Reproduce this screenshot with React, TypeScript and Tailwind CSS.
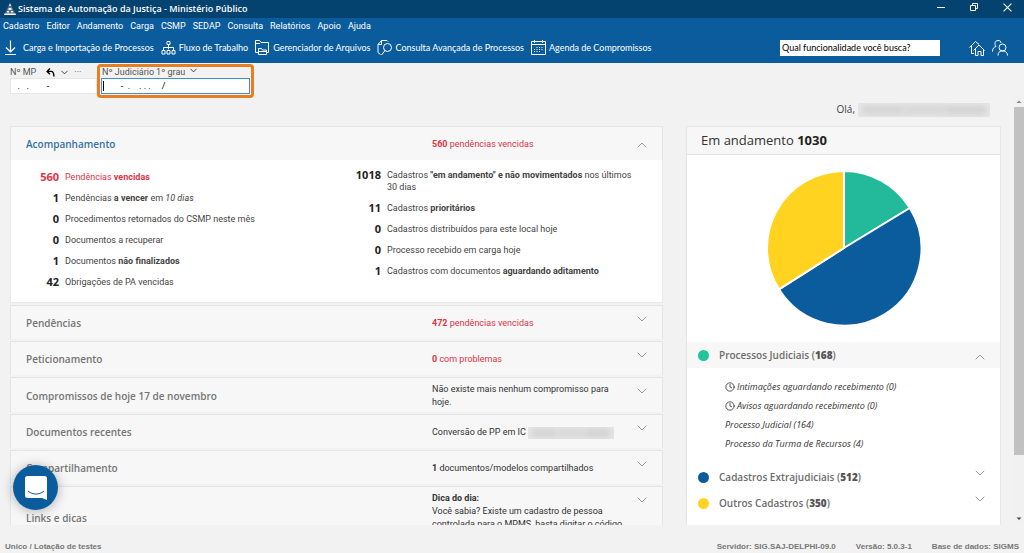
import { ReactNode } from 'react';
import clsx from 'clsx';
import { ChevronDown, ChevronUp, Clock } from 'lucide-react';

interface Counter {
  value: number;
  text: ReactNode;
  alert?: boolean;
}

interface Section {
  title: string;
  summary: ReactNode;
  alert?: boolean;
}

const menus = ['Cadastro', 'Editor', 'Andamento', 'Carga', 'CSMP', 'SEDAP', 'Consulta', 'Relatórios', 'Apoio', 'Ajuda'];

const leftCounters: Counter[] = [
  { value: 560, text: <>Pendências <b>vencidas</b></>, alert: true },
  { value: 1, text: <>Pendências <b>a vencer</b> em <i>10 dias</i></> },
  { value: 0, text: 'Procedimentos retornados do CSMP neste mês' },
  { value: 0, text: 'Documentos a recuperar' },
  { value: 1, text: <>Documentos <b>não finalizados</b></> },
  { value: 42, text: 'Obrigações de PA vencidas' },
];

const rightCounters: Counter[] = [
  { value: 1018, text: <>Cadastros <b>"em andamento" e não movimentados</b> nos últimos<br />30 dias</> },
  { value: 11, text: <>Cadastros <b>prioritários</b></> },
  { value: 0, text: 'Cadastros distribuídos para este local hoje' },
  { value: 0, text: 'Processo recebido em carga hoje' },
  { value: 1, text: <>Cadastros com documentos <b>aguardando aditamento</b></> },
];

const sections: Section[] = [
  { title: 'Pendências', summary: <><b>472</b> pendências vencidas</>, alert: true },
  { title: 'Peticionamento', summary: <><b>0</b> com problemas</>, alert: true },
  {
    title: 'Compromissos de hoje 17 de novembro',
    summary: <>Não existe mais nenhum compromisso para<br />hoje.</>,
  },
  {
    title: 'Documentos recentes',
    summary: (
      <span className="flex items-center gap-[2px] whitespace-nowrap">
        Conversão de PP em IC <Redacted className="h-3 w-[86px]" />
      </span>
    ),
  },
  { title: 'Compartilhamento', summary: <><b>1</b> documentos/modelos compartilhados</> },
];

function Redacted({ className }: { className: string }) {
  return (
    <span className={clsx('flex shrink-0 items-center gap-px overflow-hidden bg-[#e6e6e6] px-1', className)}>
      <span className="h-2 flex-1 bg-[#d2d2d2] blur-[3px]" />
      <span className="h-2 flex-1 bg-[#d6d6d6] blur-[3px]" />
      <span className="h-2 flex-1 bg-[#d0d0d0] blur-[3px]" />
    </span>
  );
}

function Icon({ children, className }: { children: ReactNode; className: string }) {
  return (
    <svg viewBox="0 0 16 16" className={clsx('shrink-0', className)} fill="none" stroke="currentColor" strokeWidth="1">
      {children}
    </svg>
  );
}

const tools = [
  {
    label: 'Carga e Importação de Processos',
    icon: <path d="M5.500 0.500v11M1 7.500l4.500 4.500L10 7.500M0 14.500h11" strokeWidth="1.200" />,
  },
  {
    label: 'Fluxo de Trabalho',
    icon: <path d="M6 1.500h3v3H6zM7.500 4.500v5M2.500 10V7.500h10V10M1 10.500h3v3.500H1zM6 10.500h3v3.500H6zM11 10.500h3v3.500h-3z" />,
  },
  {
    label: 'Gerenciador de Arquivos',
    icon: <path d="M3 12.500H0.500v-12h4l1.500 2h7.500v10H12M0.500 3.500H5M3.500 14.500v-6h3l1 1.500h4v4.500zM3.500 11.500h8" />,
  },
  {
    label: 'Consulta Avançada de Processos',
    icon: (
      <>
        <path d="M3.500 14.500L1 12.500V4.500l3.500-4H10l1 1M4.500 0.500v4H1" />
        <circle cx="10.500" cy="7.500" r="4" />
        <path d="M8 10.500l-3.500 4.500" />
      </>
    ),
  },
  {
    label: 'Agenda de Compromissos',
    icon: (
      <>
        <path d="M0.500 1.500h14v13H0.500zM0.500 4.500h14M3.500 0v3M11.500 0v3" />
        <path d="M5.500 7.500h7M3 9.500h9.500M3 11.500h7" strokeDasharray="1 1.500" />
      </>
    ),
  },
];

function TitleBar() {
  return (
    <header className="flex h-[18px] items-center bg-[#04426f] pl-1 text-white">
      <svg viewBox="0 0 12 12" className="h-3 w-3" fill="none">
        <path d="M6 0l6 12H0z" fill="#5d7181" />
        <path d="M6 0l1 3H5zM4.500 5h3v2h-3zM3 8h2v1.500H3zM7 8h2v1.500H7zM0.500 10.500h11L12 12H0z" fill="#f2f2f2" />
      </svg>
      <h1 className="ml-[2px] flex-1 font-['Open_Sans',sans-serif] text-[9px] font-semibold">
        Sistema de Automação da Justiça - Ministério Público
      </h1>
      <div className="mr-3 flex items-center gap-[25px] pb-1">
        <button aria-label="Minimizar">
          <Icon className="h-2 w-2"><path d="M0 9h16" strokeWidth="2" /></Icon>
        </button>
        <button aria-label="Restaurar">
          <Icon className="h-2 w-2"><path d="M1 5h10v10H1zM5 5V1h10v10h-4" strokeWidth="2" /></Icon>
        </button>
        <button aria-label="Fechar">
          <Icon className="h-[9px] w-[9px]"><path d="M1 1l14 14M15 1L1 15" strokeWidth="2" /></Icon>
        </button>
      </div>
    </header>
  );
}

function Toolbar() {
  return (
    <div className="bg-[#0b5c9c] text-white">
      <nav className="flex h-[15px] gap-[7px] pl-[3px]">
        {menus.map(menu => (
          <button key={menu} className="text-[9px] leading-4">{menu}</button>
        ))}
      </nav>
      <div className="flex h-[30px] items-center pr-4 pl-[5px]">
        <div className="flex gap-[7px]">
          {tools.map(tool => (
            <button key={tool.label} className="flex items-center gap-[2px] font-['Lato',sans-serif] text-[9px] whitespace-nowrap">
              <Icon className="h-4 w-4">{tool.icon}</Icon>
              {tool.label}
            </button>
          ))}
        </div>
        <input
          aria-label="Buscar funcionalidade"
          placeholder="Qual funcionalidade você busca?"
          className="ml-auto h-4 w-40 bg-white px-[2px] pb-[2px] font-['Lato',sans-serif] text-[9px] text-black placeholder:text-black"
        />
        <button aria-label="Início" className="ml-[29px]">
          <Icon className="h-4 w-4">
            <path d="M0.500 7.500L6.500 1.500l3.500 3M2.500 6v7.500H5M4.500 10.500l5.500-5.500 5.500 5.500M6.500 9v6.500H9V11.500h3v4h2.500V9" />
          </Icon>
        </button>
        <button aria-label="Usuários" className="ml-[7px]">
          <Icon className="h-4 w-4">
            <path d="M0.500 11.500c0-3 1.500-4.500 3.500-5C2 4 3 0.500 6 0.500c2 0 3 1 3 2.500M6 15.500c0-3 1.500-4 3-4.500h3c2 0.500 3.500 2 3.500 4.500" />
            <circle cx="10.500" cy="7.500" r="3.500" />
          </Icon>
        </button>
      </div>
    </div>
  );
}

function SearchFields() {
  return (
    <div className="flex h-[34px] items-start pt-px pl-[10px] text-[9px] text-[#555]">
      <div className="w-[87px] pt-[3px]">
        <div className="flex h-[11px] items-center">
          <label htmlFor="mp">Nº MP</label>
          <button aria-label="Desfazer" className="ml-[10px] text-black">
            <Icon className="h-[9px] w-[9px]"><path d="M7 1L2 6l5 5M2 6h7c4 0 5 3 5 9" strokeWidth="2.500" /></Icon>
          </button>
          <button aria-label="Opções" className="ml-1 text-[#333]"><ChevronDown size={11} /></button>
          <button aria-label="Mais" className="ml-1 leading-[9px]">···</button>
        </div>
        <input
          id="mp"
          defaultValue="  .   .        -"
          className="h-4 w-full border border-[#e6e6e6] bg-white px-[2px] text-black"
        />
      </div>
      <div className="h-[34px] w-[157px] rounded-[4px] border-3 border-[#e67e22] px-px">
        <div className="flex h-[11px] items-center pl-px">
          <label htmlFor="judiciario">Nº Judiciário</label>
          <label className="ml-[2px] flex h-[11px] items-center">
            <select aria-label="Grau" className="w-8 appearance-none leading-[11px]">
              <option>1º grau</option>
              <option>2º grau</option>
            </select>
            <ChevronDown size={11} className="-mt-1 text-[#333]" />
          </label>
        </div>
        <div className="relative">
          <input
            id="judiciario"
            defaultValue="        -  .    . . .     /"
            className="block h-4 w-full border border-[#3f8fd0] bg-white px-px text-black"
          />
          <span className="absolute top-[3px] left-[2px] h-[10px] w-px bg-black" />
        </div>
      </div>
    </div>
  );
}

function CounterList({ counters, className }: { counters: Counter[]; className: string }) {
  return (
    <ul className={clsx('flex flex-col gap-[9px]', className)}>
      {counters.map((counter, i) => (
        <li key={i} className={clsx('flex gap-[6px] leading-3', counter.alert ? 'text-[#dc3545]' : 'text-[#444]')}>
          <strong
            className={clsx(
              "w-8 shrink-0 text-right font-['Open_Sans',sans-serif] text-[11px]",
              !counter.alert && 'text-[#222]',
            )}
          >
            {counter.value}
          </strong>
          <span>{counter.text}</span>
        </li>
      ))}
    </ul>
  );
}

function Panel({ title, summary, alert, open }: Section & { open?: boolean }) {
  return (
    <button
      aria-expanded={!!open}
      className="flex min-h-[34px] w-full items-center border-x border-t border-[#e4e4e4] bg-[#f7f7f7] pt-[5px] pr-3 pb-[3px] pl-[15px] text-left"
    >
      <span
        className={clsx(
          "w-[406px] shrink-0 font-['Open_Sans',sans-serif] text-[10px] font-semibold",
          open ? 'text-[#3572a5]' : 'text-[#757575]',
        )}
      >
        {title}
      </span>
      <span className={clsx('flex-1 pr-2 leading-[13px]', alert ? 'text-[#dc3545]' : 'text-[#333]')}>{summary}</span>
      {open ? (
        <ChevronUp size={16} strokeWidth={1} className="self-center text-[#666]" />
      ) : (
        <ChevronDown size={16} strokeWidth={1} className="self-start text-[#666]" />
      )}
    </button>
  );
}

function PieChart() {
  return (
    <svg viewBox="-77 -77 154 154" className="mx-auto h-[154px] w-[154px]" stroke="#fff" strokeWidth="2">
      <path d="M0 0L0 -77A77 77 0 0 1 65.800 -40z" fill="#22ba9b" />
      <path d="M0 0L65.800 -40A77 77 0 1 1 -65 41.300z" fill="#0b5c9c" />
      <path d="M0 0L-65 41.300A77 77 0 0 1 0 -77z" fill="#ffd320" />
    </svg>
  );
}

function Category({ name, total, dot, open }: { name: string; total: number; dot: string; open?: boolean }) {
  return (
    <button
      aria-expanded={!!open}
      className={clsx(
        "flex h-[26px] w-full items-center pr-3 pl-[11px] font-['Open_Sans',sans-serif] text-[10px] text-[#6d6d6d]",
        open && 'bg-[#f7f7f7]',
      )}
    >
      <span className={clsx('mr-[10px] h-[11px] w-[11px] rounded-full', dot)} />
      <span className="flex-1 text-left font-semibold">
        {name} (<b className="text-[#555]">{total}</b>)
      </span>
      {open ? (
        <ChevronUp size={16} strokeWidth={1} className="mt-1" />
      ) : (
        <ChevronDown size={16} strokeWidth={1} className="mb-2" />
      )}
    </button>
  );
}

function Progress() {
  return (
    <aside className="w-[315px] shrink-0 border border-[#e6e6e6] bg-white pb-6">
      <h2 className="h-7 border-b border-[#e2e2e2] bg-[#f7f7f7] pl-[14px] font-['Open_Sans',sans-serif] text-[13px] leading-[27px] text-[#333]">
        Em andamento <b className="text-[#222]">1030</b>
      </h2>
      <div className="pt-4 pb-[17px]">
        <PieChart />
      </div>
      <Category name="Processos Judiciais" total={168} dot="bg-[#22c49b]" open />
      <ul className="flex flex-col gap-2 pt-[13px] pb-[15px] pl-[38px] font-['Open_Sans',sans-serif] leading-[11px] text-[#333] italic">
        <li className="flex items-center gap-[2px]"><Clock size={10} />Intimações aguardando recebimento (0)</li>
        <li className="flex items-center gap-[2px]"><Clock size={10} />Avisos aguardando recebimento (0)</li>
        <li>Processo Judicial (164)</li>
        <li>Processo da Turma de Recursos (4)</li>
      </ul>
      <Category name="Cadastros Extrajudiciais" total={512} dot="bg-[#0b5c9c]" />
      <Category name="Outros Cadastros" total={350} dot="bg-[#ffd320]" />
    </aside>
  );
}

function Scrollbar() {
  return (
    <div aria-hidden className="flex w-[10px] flex-col items-center bg-[#f1f1f1]">
      <svg viewBox="0 0 10 10" className="h-[10px] w-[10px]"><path d="M2.500 6L5 3.500 7.500 6z" fill="#888" /></svg>
      <div className="w-full flex-[348] bg-[#c1c1c1]" />
      <div className="flex-[58]" />
      <svg viewBox="0 0 10 10" className="h-3 w-[10px]"><path d="M2.500 3.500h5L5 6z" fill="#444" /></svg>
    </div>
  );
}

export default function App() {
  return (
    <div className="flex h-screen flex-col overflow-hidden bg-[#f2f2f2] font-['Roboto','Open_Sans',sans-serif] text-[9px]">
      <TitleBar />
      <Toolbar />
      <SearchFields />
      <div className="flex min-h-0 flex-1">
        <main className="min-w-0 flex-1 overflow-hidden pr-[13px] pl-[10px]">
          <div className="flex h-[29px] items-center justify-end gap-[3px] pr-[11px] pb-1 font-['Open_Sans',sans-serif] text-[10px] text-[#444]">
            Olá, <Redacted className="h-[14px] w-[132px]" />
          </div>
          <div className="flex items-start gap-[23px]">
            <div className="flex min-w-0 flex-1 flex-col gap-[2px]">
              <section>
                <Panel title="Acompanhamento" summary={<><b>560</b> pendências vencidas</>} alert open />
                <div className="flex border-x border-b border-[#e9e9e9] bg-white pb-[14px]">
                  <CounterList counters={leftCounters} className="w-[322px] pt-[11px] pl-4" />
                  <CounterList counters={rightCounters} className="flex-1 pt-[9px] pl-4" />
                </div>
              </section>
              {sections.map(section => (
                <Panel key={section.title} {...section} />
              ))}
              <Panel
                title="Links e dicas"
                summary={
                  <span className="block pb-[13px]">
                    <b>Dica do dia:</b>
                    <br />
                    Você sabia? Existe um cadastro de pessoa
                    <br />
                    controlada para o MPMS, basta digitar o código
                  </span>
                }
              />
            </div>
            <Progress />
          </div>
        </main>
        <Scrollbar />
      </div>
      <footer className="flex h-7 items-end gap-5 px-[5px] font-['Liberation_Sans',sans-serif] text-[8px] leading-3 font-bold text-[#777]">
        <span className="flex-1">Unico / Lotação de testes</span>
        <span>Servidor: SIG.SAJ-DELPHI-09.0</span>
        <span>Versão: 5.0.3-1</span>
        <span>Base de dados: SIGMS</span>
      </footer>
      <button
        aria-label="Abrir chat"
        className="fixed bottom-[43px] left-[13px] flex h-[45px] w-[45px] items-center justify-center rounded-full bg-[#0b5c9c] shadow-[0_1px_12px_rgba(0,0,0,0.3)]"
      >
        <svg viewBox="0 0 22 24" className="h-6 w-[22px]">
          <path d="M2.500 0h17A2.500 2.500 0 0 1 22 2.500V24l-5-2H2.500A2.500 2.500 0 0 1 0 19.500v-17A2.500 2.500 0 0 1 2.500 0z" fill="#fff" />
          <path d="M3.500 15.500c4.500 3.500 10.500 3.500 15 0" fill="none" stroke="#0b5c9c" strokeLinecap="round" />
        </svg>
      </button>
    </div>
  );
}
